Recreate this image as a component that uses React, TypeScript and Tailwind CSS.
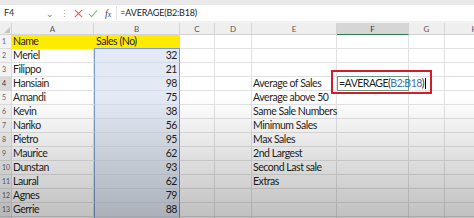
import React from "react";

const names = ["Meriel","Filippo","Hansiain","Amandi","Kevin","Nariko","Pietro","Maurice","Dunstan","Laural","Agnes","Gerrie","Farrel"];
const sales = [32,21,98,75,38,56,95,62,93,62,79,88,55];
const labels: Record<number,string> = {4:"Average of Sales",5:"Average above 50",6:"Same Sale Numbers",7:"Minimum Sales",8:"Max Sales",9:"2nd Largest",10:"Second Last sale",11:"Extras"};
const cols = ["A","B","C","D","E","F","G","H"];

export default function App() {
  const rows = Array.from({ length: 14 }, (_, i) => i + 1);
  return (
    <div className="relative w-[474px] h-[218px] overflow-hidden bg-white text-[#1f1f1f]" style={{ fontFamily: "Lato, 'Noto Sans', sans-serif" }}>
      {/* top strip */}
      <div className="h-[5px] bg-[#e9e9e9]" />
      {/* formula bar */}
      <div className="h-[16px] flex items-center bg-white text-[9px]">
        <div className="w-[46px] pl-[4px] text-[#333]">F4</div>
        <div className="w-[14px] text-[#777] text-[9px] leading-none">⌄</div>
        <div className="w-[12px] text-[#999] leading-none">⋮</div>
        <div className="flex items-center gap-[3px] pl-[1px]">
          <svg width="11" height="11" viewBox="0 0 12 12"><path d="M2 2 L10 10 M10 2 L2 10" stroke="#e0605a" strokeWidth="1.2" /></svg>
          <svg width="12" height="11" viewBox="0 0 12 12"><path d="M1.5 6.5 L4.5 9.5 L10.5 2.5" stroke="#7fbf8a" strokeWidth="1.2" fill="none" /></svg>
          <span className="ml-[3px] italic text-[10px] text-[#444]" style={{ fontFamily: "'Liberation Serif', serif" }}>f<span className="text-[8px]">x</span></span>
        </div>
        <div className="ml-[5px] pl-[3px] border-l border-[#e3e3e3] text-[9px] tracking-[-0.2px] text-[#222]">=AVERAGE(B2:B18)</div>
      </div>
      <div className="h-[2px] bg-[#f1f1f1]" />
      {/* grid */}
      <div className="grid grid-cols-[12px_82px_86px_35px_37px_85px_72px_36px_60px] tracking-[-0.45px]">
        {/* header row */}
        <div className="h-[12px] bg-[#efefef] border-r border-b border-[#d4d4d4] relative">
          <div className="absolute right-[1px] bottom-[1px] w-0 h-0 border-l-[6px] border-l-transparent border-b-[6px] border-b-[#c4c4c4]" />
        </div>
        {cols.map((c) => (
          <div key={c} className={`h-[12px] flex items-center justify-center text-[8px] tracking-normal border-r border-b ${c === "F" ? "bg-[#d6d6d6] border-b-[#2f7d4f] border-r-[#d4d4d4] text-[#333]" : "bg-[#efefef] border-[#d4d4d4] text-[#555]"}`}>{c}</div>
        ))}
        {rows.map((r) => {
          const isHead = r === 1;
          const name = isHead ? "Name" : names[r - 2];
          const val = isHead ? "Sales (No)" : sales[r - 2];
          return (
            <React.Fragment key={r}>
              <div className={`h-[14px] flex items-center pl-[2px] text-[7px] tracking-normal border-r border-b ${r === 4 ? "bg-[#d9d9d9] border-[#d4d4d4] text-[#333]" : "bg-[#f3f3f3] border-[#dcdcdc] text-[#666]"}`}>{r}</div>
              <div className={`h-[14px] flex items-center pl-[1px] text-[10.5px] border-r border-b whitespace-nowrap ${isHead ? "bg-[#ffeb00] border-[#ffeb00]" : "border-[#e2e2e2]"}`}>{name}</div>
              <div className={`h-[14px] flex items-center text-[10.5px] whitespace-nowrap ${isHead ? "bg-[#ffeb00] pl-[2px] border-b border-b-[#7b9acb]" : "bg-[#e3eaf5] justify-end pr-[2px] border-l border-r border-b border-l-[#7b9acb] border-r-[#7b9acb] border-b-[#d5dde9]"}`}>{val}</div>
              <div className="h-[14px] border-r border-b border-[#e2e2e2]" />
              <div className="h-[14px] border-r border-b border-[#e2e2e2]" />
              <div className="h-[14px] flex items-center pl-[1px] text-[10.5px] whitespace-nowrap border-r border-b border-[#e2e2e2]">{labels[r] ?? ""}</div>
              <div className={`h-[14px] relative ${r === 4 ? "border border-[#6e9a80] -mt-px h-[15px]" : "border-r border-b border-[#e2e2e2]"}`}>
                {r === 4 && (
                  <div className="absolute left-0 top-0 h-[13px] flex items-center pl-[1px] text-[10.5px] tracking-[-0.5px] whitespace-nowrap z-10">
                    =AVERAGE(<span className="text-[#3d6fb5]">B2:B18</span>)<span className="ml-[1px] inline-block w-[1px] h-[11px] bg-black" />
                  </div>
                )}
              </div>
              <div className="h-[14px] border-r border-b border-[#e2e2e2]" />
              <div className="h-[14px] border-r border-b border-[#e2e2e2]" />
            </React.Fragment>
          );
        })}
      </div>
      {/* red highlight box */}
      <div className="absolute left-[331px] top-[70px] w-[101px] h-[24px] border-2 border-[#d01c2c] z-20" />
      {/* bottom vignette */}
      <div className="absolute inset-0 pointer-events-none bg-linear-to-b from-transparent from-45% to-black/25 z-30" />
    </div>
  );
}
